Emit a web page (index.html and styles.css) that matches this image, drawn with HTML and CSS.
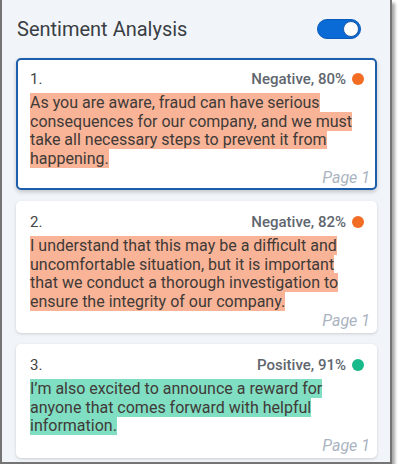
FILE: index.html
```html
<!DOCTYPE html>
<html lang="en">
<head>
<meta charset="utf-8">
<title>Sentiment Analysis</title>
<link rel="stylesheet" href="styles.css">
</head>
<body>
<div class="frame">
  <div class="header">
    <h1 class="title">Sentiment Analysis</h1>
    <div class="toggle"><span class="knob"></span></div>
  </div>
  <div class="list">
    <div class="card selected">
      <div class="card-head">
        <span class="num">1.</span>
        <span class="label">Negative, 80%<span class="dot neg"></span></span>
      </div>
      <p class="excerpt"><span class="hl neg">As you are aware, fraud can have serious consequences for our company, and we must take all necessary steps to prevent it from happening.</span></p>
      <div class="page">Page 1</div>
    </div>
    <div class="card">
      <div class="card-head">
        <span class="num">2.</span>
        <span class="label">Negative, 82%<span class="dot neg"></span></span>
      </div>
      <p class="excerpt"><span class="hl neg">I understand that this may be a difficult and uncomfortable situation, but it is important that we conduct a thorough investigation to ensure the integrity of our company.</span></p>
      <div class="page">Page 1</div>
    </div>
    <div class="card">
      <div class="card-head">
        <span class="num">3.</span>
        <span class="label">Positive, 91%<span class="dot pos"></span></span>
      </div>
      <p class="excerpt"><span class="hl pos">I’m also excited to announce a reward for anyone that comes forward with helpful information.</span></p>
      <div class="page">Page 1</div>
    </div>
  </div>
</div>
</body>
</html>
```

FILE: styles.css
```css
* { box-sizing: border-box; }
html, body {
  margin: 0;
  padding: 0;
  background: #ffffff;
}
body {
  font-family: Roboto, "Liberation Sans", Arial, sans-serif;
  color: #3d3d3d;
}
.frame {
  width: 392px;
  background: #f1f5f9;
  border-left: 2px solid #747474;
  border-right: 2px solid #747474;
  border-bottom: 2px solid #747474;
  box-shadow: 3px 3px 3px rgba(0, 0, 0, 0.35);
  padding: 17px 13px 4px 14px;
}
.header {
  display: flex;
  align-items: center;
  justify-content: space-between;
  height: 24px;
  padding: 0 16px 0 1px;
  margin-bottom: 17px;
}
.title {
  margin: 0;
  font-size: 20px;
  font-weight: 400;
  line-height: 24px;
  color: #3a3e44;
}
.toggle {
  position: relative;
  width: 44px;
  height: 20px;
  border-radius: 10px;
  background: #0b6bd6;
  border: 1px solid #0a5bb8;
}
.knob {
  position: absolute;
  right: 1px;
  top: 1px;
  width: 16px;
  height: 16px;
  border-radius: 50%;
  background: #ffffff;
  border: 1px solid #1d5aa6;
}
.list {
  display: flex;
  flex-direction: column;
  gap: 11px;
}
.card {
  background: #ffffff;
  border: 2px solid #ffffff;
  border-radius: 5px;
  box-shadow: 0 1px 3px rgba(0, 0, 0, 0.16);
  padding: 9px 5px 1px 12px;
}
.card.selected {
  border-color: #1c5eab;
  box-shadow: 0 2px 4px rgba(0, 0, 0, 0.2);
}
.card-head {
  display: flex;
  align-items: center;
  justify-content: space-between;
  height: 20px;
  padding-right: 6px;
  margin-bottom: 5px;
}
.num {
  font-size: 15px;
  color: #444444;
}
.label {
  display: flex;
  align-items: center;
  font-size: 15px;
  font-weight: 500;
  color: #60666e;
}
.dot {
  width: 12px;
  height: 12px;
  border-radius: 50%;
  margin-left: 6px;
}
.dot.neg { background: #f36c24; }
.dot.pos { background: #18b98a; }
.excerpt {
  margin: 0;
  padding-right: 8px;
  font-size: 16px;
  line-height: 18.5px;
  color: #403a38;
}
.hl.neg { background: #f9b497; }
.hl.pos { background: #80dec2; }
.page {
  text-align: right;
  font-size: 16px;
  font-style: italic;
  line-height: 19px;
  color: #aab3c0;
}
```
